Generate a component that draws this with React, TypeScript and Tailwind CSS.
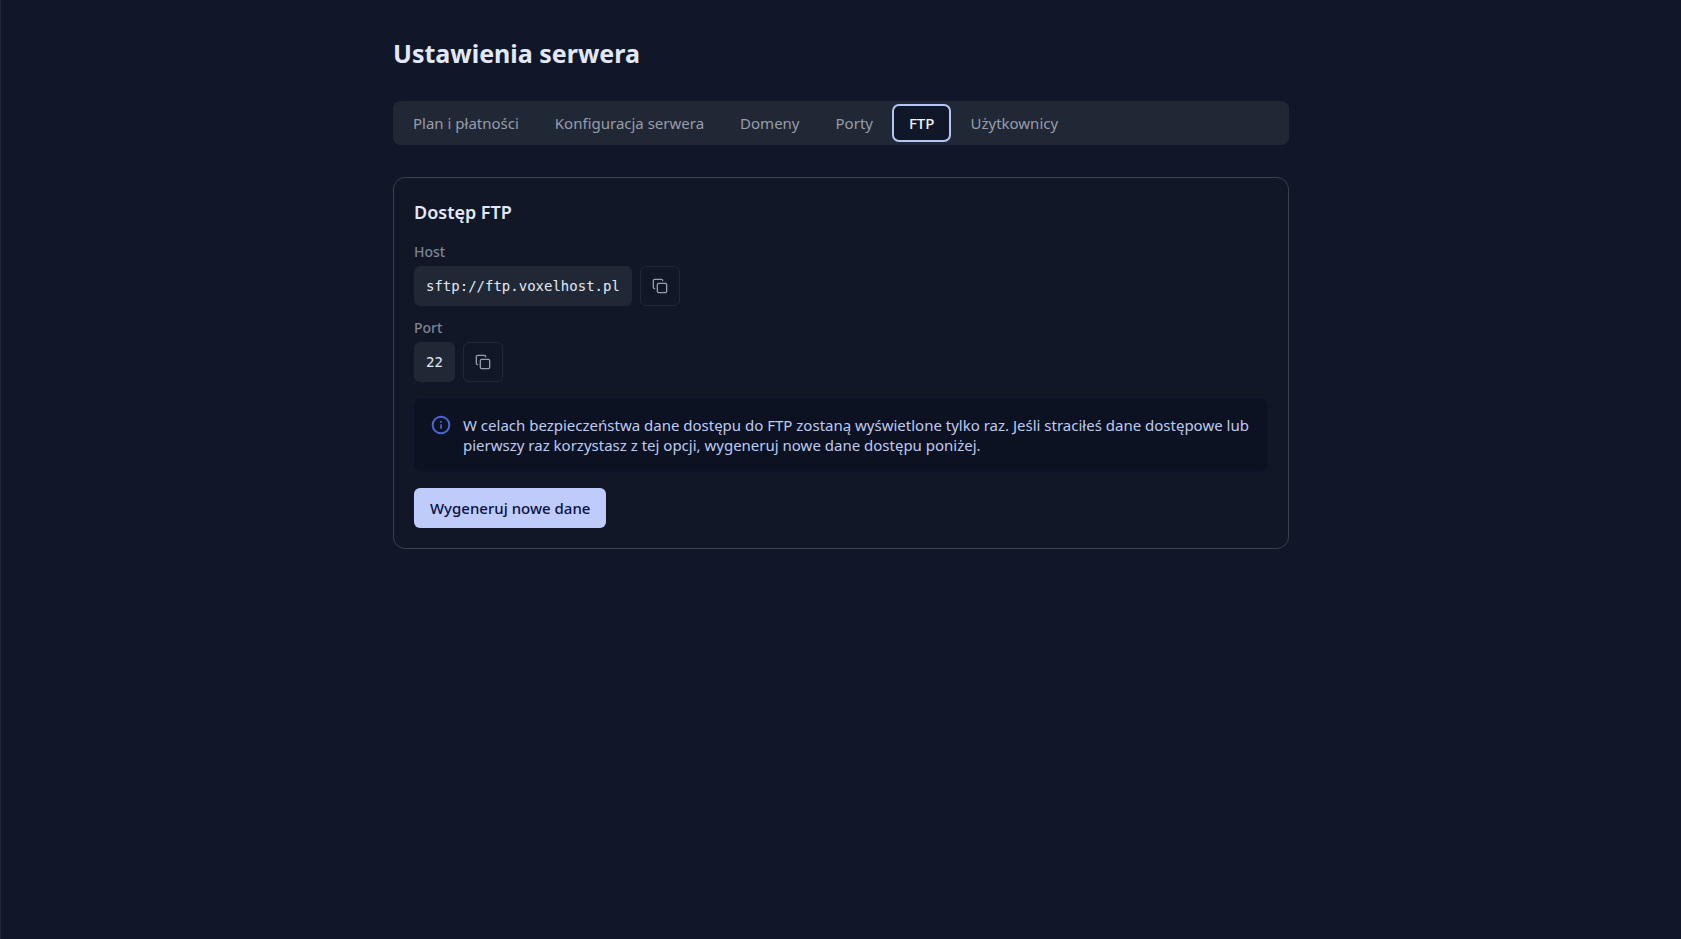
import { Copy } from 'lucide-react';
import { clsx } from 'clsx';

const tabs = [
  'Plan i płatności',
  'Konfiguracja serwera',
  'Domeny',
  'Porty',
  'FTP',
  'Użytkownicy',
];

const InfoIcon = () => (
  <svg
    className="size-5 shrink-0 text-[#4a66d0]"
    viewBox="0 0 24 24"
    fill="none"
    stroke="currentColor"
    strokeWidth="2"
    aria-hidden="true"
  >
    <circle cx="12" cy="12" r="10" strokeWidth="2.4" />
    <path d="M12 11v5.5M12 7.2v2" />
  </svg>
);

interface CopyFieldProps {
  id: string;
  label: string;
  value: string;
}

const CopyField = ({ id, label, value }: CopyFieldProps) => (
  <div className="flex flex-col gap-1">
    <span id={id} className="text-sm font-medium text-[#7d8494]">
      {label}
    </span>
    <div className="flex gap-2">
      <code
        className="flex h-10 items-center rounded-md bg-[#212835] px-3 text-sm text-[#e2e8f5] font-['DejaVu_Sans_Mono',monospace]"
        aria-labelledby={id}
      >
        {value}
      </code>
      <button
        type="button"
        className="flex size-10 items-center justify-center rounded-md border border-[#212835] text-[#969cab] hover:bg-[#212835]"
        aria-label={`Kopiuj ${label}`}
        onClick={() => navigator.clipboard.writeText(value)}
      >
        <Copy size={16} />
      </button>
    </div>
  </div>
);

export default function App() {
  return (
    <div className="min-h-screen border-l border-[#212835] bg-[#101728] font-['Noto_Sans',sans-serif] text-[#e2e8f9]">
      <main className="mx-auto max-w-4xl pt-[37px] pb-9">
        <h1 className="mb-8 text-[25px]/8 font-bold">Ustawienia serwera</h1>

        {/* Tabs */}
        <div role="tablist" className="mb-8 flex gap-1 rounded-lg bg-[#212835] p-1">
          {tabs.map((tab) => (
            <button
              key={tab}
              type="button"
              role="tab"
              aria-selected={tab === 'FTP'}
              className={clsx(
                'rounded-md px-4 py-2 text-[15px]/5',
                tab === 'FTP'
                  ? 'bg-[#101728] font-medium text-[#f1f5fb] outline-2 -outline-offset-1 outline-[#b4c6f5]'
                  : 'text-[#969cab]',
              )}
            >
              {tab}
            </button>
          ))}
        </div>

        {/* FTP access */}
        <section className="rounded-xl border border-[#3a404e] bg-[#111726] p-5">
          <h2 className="mb-4 text-lg/7 font-semibold">Dostęp FTP</h2>
          <div className="flex flex-col gap-3">
            <CopyField id="ftp-host" label="Host" value="sftp://ftp.voxelhost.pl" />
            <CopyField id="ftp-port" label="Port" value="22" />
          </div>

          <div
            role="note"
            className="my-4 flex gap-3 rounded-lg border border-[#0d132b] bg-[#0c1221] p-4 text-[15px]/5 text-[#bfcbf2]"
          >
            <InfoIcon />
            <p>
              W celach bezpieczeństwa dane dostępu do FTP zostaną wyświetlone tylko raz. Jeśli
              straciłeś dane dostępowe lub pierwszy raz korzystasz z tej opcji, wygeneruj nowe dane
              dostępu poniżej.
            </p>
          </div>

          <button
            type="button"
            className="h-10 rounded-md bg-[#becbfb] px-4 text-[15px]/5 font-medium text-[#0a1145]"
          >
            Wygeneruj nowe dane
          </button>
        </section>
      </main>
    </div>
  );
}
